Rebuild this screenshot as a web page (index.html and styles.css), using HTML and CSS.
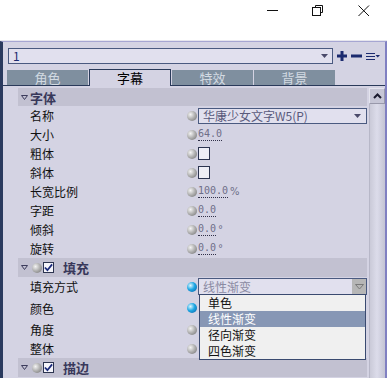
FILE: index.html
```html
<!DOCTYPE html>
<html lang="zh-CN">
<head>
    <meta charset="UTF-8">
    <title>字幕属性</title>
    <link rel="stylesheet" href="styles.css">
</head>
<body>
    <!-- window caption buttons -->
    <div class="titlebar">
        <div class="cap"><svg width="12" height="12" viewBox="0 0 12 12"><path d="M1 5.5H12" stroke="#111" stroke-width="1"/></svg></div>
        <div class="cap"><svg width="12" height="12" viewBox="0 0 12 12" fill="none" stroke="#111" stroke-width="1"><path d="M3.5 2.5V0.5H10.5V7.5H8.5"/><rect x="0.5" y="2.5" width="8" height="8"/></svg></div>
        <div class="cap"><svg width="12" height="12" viewBox="0 0 12 12" stroke="#111" stroke-width="1"><path d="M0.5 0.5L11 11M11 0.5L0.5 11"/></svg></div>
    </div>

    <div class="panel">
        <!-- layer selector -->
        <div class="toolbar">
            <div class="combo layer-combo">
                <span class="combo-text">1</span>
                <svg class="arrow" width="7" height="4" viewBox="0 0 7 4"><path d="M0 0H7L3.5 4Z" fill="#4a4a6a"/></svg>
            </div>
            <svg class="tool" width="10" height="10" viewBox="0 0 10 10"><path d="M5 0V10M0 5H10" stroke="#1b2a6e" stroke-width="3"/></svg>
            <svg class="tool" width="11" height="10" viewBox="0 0 11 10"><path d="M0 5H11" stroke="#1b2a6e" stroke-width="3"/></svg>
            <svg class="tool" width="14" height="10" viewBox="0 0 14 10"><path d="M0 2.5H9M0 5.5H9M0 8.5H9" stroke="#1b2a6e" stroke-width="1.2"/><path d="M9.5 4H14L11.75 6.5Z" fill="#1b2a6e"/></svg>
        </div>

        <div class="tabs">
            <div class="tab">角色</div>
            <div class="tab active">字幕</div>
            <div class="tab">特效</div>
            <div class="tab">背景</div>
        </div>

        <div class="content">
            <div class="grid">
                <div class="section first">
                    <svg class="tri" width="7" height="5" viewBox="0 0 7 5"><path d="M0.5 0.5H6.5L3.5 4.5Z" fill="none" stroke="#3c3c5c"/></svg>
                    <span class="section-title">字体</span>
                </div>
                <div class="row">
                    <span class="label">名称</span>
                    <span class="val"><i class="ball"></i>
                        <span class="combo font-combo">
                            <span class="combo-text">华康少女文字W5(P)</span>
                            <svg class="arrow" width="7" height="4" viewBox="0 0 7 4"><path d="M0 0H7L3.5 4Z" fill="#4a4a6a"/></svg>
                        </span>
                    </span>
                </div>
                <div class="row"><span class="label">大小</span><span class="val"><i class="ball"></i><span class="num">64.0</span></span></div>
                <div class="row"><span class="label">粗体</span><span class="val"><i class="ball"></i><i class="box"></i></span></div>
                <div class="row"><span class="label">斜体</span><span class="val"><i class="ball"></i><i class="box"></i></span></div>
                <div class="row"><span class="label">长宽比例</span><span class="val"><i class="ball"></i><span class="num">100.0</span><span class="unit">%</span></span></div>
                <div class="row"><span class="label">字距</span><span class="val"><i class="ball"></i><span class="num">0.0</span></span></div>
                <div class="row"><span class="label">倾斜</span><span class="val"><i class="ball"></i><span class="num">0.0</span><span class="unit">°</span></span></div>
                <div class="row"><span class="label">旋转</span><span class="val"><i class="ball"></i><span class="num">0.0</span><span class="unit">°</span></span></div>

                <div class="section">
                    <svg class="tri" width="7" height="5" viewBox="0 0 7 5"><path d="M0.5 0.5H6.5L3.5 4.5Z" fill="none" stroke="#3c3c5c"/></svg>
                    <i class="ball"></i>
                    <i class="box checked"><svg width="10" height="9" viewBox="0 0 10 9"><path d="M1 4.5L3.8 7.5L9 1" fill="none" stroke="#1b2a7a" stroke-width="2"/></svg></i>
                    <span class="section-title gap">填充</span>
                </div>
                <div class="row">
                    <span class="label">填充方式</span>
                    <span class="val"><i class="ball blue"></i>
                        <span class="combo fill-combo">
                            <span class="combo-text dim">线性渐变</span>
                            <span class="drop-btn"><svg width="9" height="6" viewBox="0 0 9 6"><path d="M0.5 0.5H8.5L4.5 5Z" fill="none" stroke="#7a7a7a"/></svg></span>
                            <span class="droplist">
                                <span class="item">单色</span>
                                <span class="item sel">线性渐变</span>
                                <span class="item">径向渐变</span>
                                <span class="item">四色渐变</span>
                            </span>
                        </span>
                    </span>
                </div>
                <div class="row tall"><span class="label">颜色</span><span class="val"><i class="ball blue"></i></span></div>
                <div class="row"><span class="label">角度</span><span class="val"><i class="ball"></i></span></div>
                <div class="row"><span class="label">整体</span><span class="val"><i class="ball"></i></span></div>

                <div class="section">
                    <svg class="tri" width="7" height="5" viewBox="0 0 7 5"><path d="M0.5 0.5H6.5L3.5 4.5Z" fill="none" stroke="#3c3c5c"/></svg>
                    <i class="ball"></i>
                    <i class="box checked"><svg width="10" height="9" viewBox="0 0 10 9"><path d="M1 4.5L3.8 7.5L9 1" fill="none" stroke="#1b2a7a" stroke-width="2"/></svg></i>
                    <span class="section-title gap">描边</span>
                </div>
            </div>

            <div class="scrollbar">
                <div class="sb-up"><svg width="9" height="6" viewBox="0 0 9 6"><path d="M1 5L4.5 1.5L8 5" fill="none" stroke="#1c1c30" stroke-width="2"/></svg></div>
            </div>
        </div>
    </div>
</body>
</html>
```

FILE: styles.css
```css
body {
    margin: 0;
    width: 387px;
    height: 378px;
    overflow: hidden;
    background: #ffffff;
    font-family: "Noto Sans CJK SC", "Liberation Sans", sans-serif;
    font-size: 12px;
}

/* window caption */
.titlebar {
    height: 41px;
    display: flex;
    justify-content: flex-end;
    align-items: flex-start;
}

.cap {
    width: 46px;
    height: 21px;
    display: flex;
    align-items: center;
    justify-content: center;
}

/* main panel */
.panel {
    height: 336px;
    background: #d4d3e3;
    border-top: 1px solid #a6a6d2;
    border-left: 3px solid #2a3a5e;
    border-right: 2px solid #8080c2;
    box-shadow: 0 -1px 0 #e6e6ee;
    display: flex;
    flex-direction: column;
}

.toolbar {
    display: flex;
    align-items: center;
    padding: 6px 0 0 5px;
    height: 16px;
}

.combo {
    display: flex;
    align-items: center;
    background: #e1e0ee;
    border: 1px solid #4a5a80;
    box-sizing: border-box;
    position: relative;
}

.combo-text {
    flex: 1;
    padding-left: 4px;
    line-height: 14px;
    white-space: nowrap;
}

.layer-combo {
    width: 325px;
    height: 16px;
    color: #1b2a6e;
}

.layer-combo .arrow {
    margin-right: 4px;
}

.tool {
    margin-left: 4px;
}

/* tabs */
.tabs {
    display: flex;
    margin-top: 5px;
    padding-left: 4px;
    height: 16px;
    border-bottom: 1px solid #2a3a5a;
}

.tab {
    width: 81px;
    height: 15px;
    margin-top: 1px;
    margin-right: 1px;
    background: #7f8f9f;
    color: #d2dae2;
    text-align: center;
    line-height: 15px;
    font-size: 13px;
}

.tab.active {
    width: 80px;
    height: 16px;
    margin-top: 0;
    background: #d4d3e3;
    color: #000;
    border: 1px solid #2a3a5a;
    border-bottom: none;
}

/* property grid */
.content {
    flex: 1;
    display: flex;
    padding-top: 2px;
    min-height: 0;
}

.grid {
    width: 349px;
    margin-left: 15px;
    margin-right: 2px;
}

.section {
    height: 19px;
    background: #c2c1d1;
    display: flex;
    align-items: center;
    padding-left: 3px;
}

.section.first {
    height: 18px;
}

.tri {
    margin-right: 2px;
}

.section .ball {
    margin-left: 2px;
}

.section-title {
    font-weight: bold;
    font-size: 13px;
    color: #38385a;
}

.section-title.gap {
    margin-left: 9px;
}

.row {
    height: 19px;
    display: flex;
    align-items: center;
}

.row.tall {
    height: 24px;
}

.label {
    width: 157px;
    padding-left: 12px;
    color: #111;
}

.val {
    display: flex;
    align-items: center;
    flex: 1;
}

.ball {
    display: inline-block;
    width: 10px;
    height: 10px;
    border-radius: 50%;
    background: radial-gradient(circle at 35% 35%, #f4f4f4 0, #b4b4b4 45%, #6c6c6c 100%);
}

.ball.blue {
    background: radial-gradient(circle at 35% 35%, #e0f8ff 0, #20a8e4 45%, #0458a0 100%);
}

.box {
    display: inline-flex;
    align-items: center;
    justify-content: center;
    width: 12px;
    height: 13px;
    box-sizing: border-box;
    background: #eeeef6;
    border: 1px solid #2c3450;
    margin-left: 1px;
}

.box.checked {
    width: 11px;
    height: 11px;
    background: #f4f4fa;
}

.num {
    margin-left: 1px;
    font-family: "DejaVu Sans Mono", monospace;
    font-size: 10px;
    color: #6e6e88;
    line-height: 12px;
    border-bottom: 1px dotted #303048;
}

.unit {
    margin-left: 2px;
    font-family: "DejaVu Sans", sans-serif;
    font-size: 10px;
    color: #6e6e88;
}

.font-combo {
    width: 169px;
    height: 16px;
    margin-left: 1px;
    color: #5a5a7c;
}

.font-combo .arrow {
    margin-right: 5px;
}

.fill-combo {
    width: 169px;
    height: 17px;
    margin-left: 1px;
}

.dim {
    color: #8a8aa2;
}

.drop-btn {
    width: 14px;
    height: 15px;
    background: #b6b6b6;
    display: flex;
    align-items: center;
    justify-content: center;
}

/* open dropdown list, sits over the rows below */
.droplist {
    position: absolute;
    top: 15px;
    left: 0;
    width: 167px;
    box-sizing: border-box;
    background: #f0f0f0;
    border: 1px solid #3a4a70;
    display: flex;
    flex-direction: column;
    z-index: 10;
}

.item {
    height: 16px;
    line-height: 16px;
    padding-left: 8px;
    color: #111;
}

.item.sel {
    background: #8797b5;
    color: #fff;
}

/* scrollbar */
.scrollbar {
    width: 16px;
    background: linear-gradient(to right, #a4a4b8 0, #cacad8 1px, #dcdcea 50%, #c4c4d4 100%);
}

.sb-up {
    height: 16px;
    background: #c6c6d6;
    border: 1px solid #e4e4ee;
    border-right-color: #9898aa;
    border-bottom-color: #9898aa;
    box-sizing: border-box;
    display: flex;
    align-items: center;
    justify-content: center;
}
```
